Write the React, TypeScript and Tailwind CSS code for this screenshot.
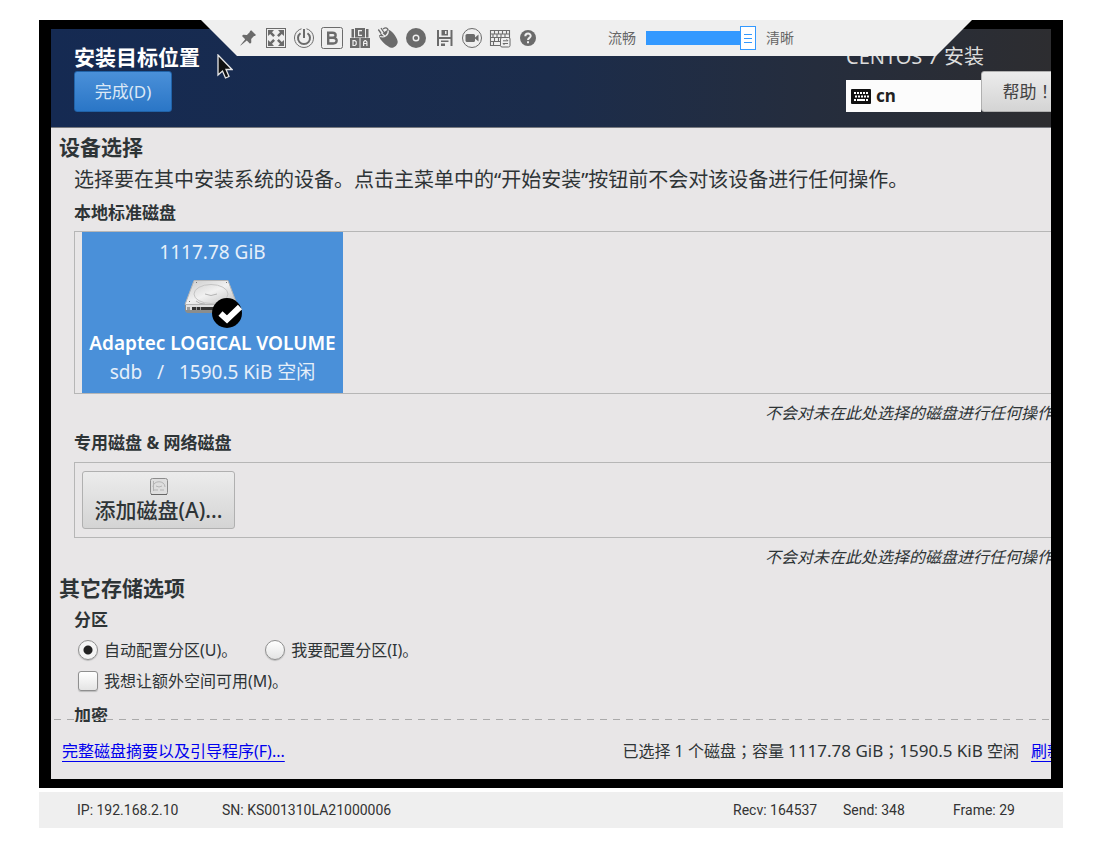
import type { ReactNode } from 'react';

const tools: { label: string; icon: ReactNode }[] = [
  {
    label: '固定',
    icon: (
      <path
        fill="currentColor"
        d="M13.2 2.2 18 7l-1.2 1.1-.8-.2-2.8 3 .1 3.7-1.3 1.2-3.2-3.3L3 17.3l-.8.4.4-.8 4.6-5.7L4 8l1.2-1.2 3.7.1 3-2.9-.1-.7z"
      />
    ),
  },
  {
    label: '全屏',
    icon: (
      <>
        <rect x="0.5" y="0.5" width="19" height="19" fill="none" stroke="currentColor" />
        <path fill="currentColor" d="M2 2h6L6 4.200l3 3L7.200 9l-3-3L2 8zM18 2v6l-2.200-2-3 3L11 7.200l3-3L12 2zM2 18v-6l2.200 2 3-3L9 12.800l-3 3L8 18zM18 18h-6l2-2.200-3-3 1.800-1.800 3 3L18 12z" />
      </>
    ),
  },
  {
    label: '电源',
    icon: (
      <g fill="none" stroke="currentColor">
        <path d="M7.500.8a9.500 9.500 0 1 0 5 0" />
        <path strokeWidth="2" d="M6.500 5.200a6 6 0 1 0 7 0M10 1v9" />
      </g>
    ),
  },
  {
    label: '引导',
    icon: (
      <>
        <rect x="-0.500" y="-0.500" width="21" height="21" rx="2" fill="none" stroke="currentColor" />
        <path
          fill="none"
          stroke="currentColor"
          strokeWidth="2.400"
          d="M6.200 4.700h4.300c4.200 0 4.200 5 0 5H6.200h5c4.600 0 4.600 5.800 0 5.800h-5zV16"
        />
      </>
    ),
  },
  {
    label: '组合键',
    icon: (
      <>
        <path fill="currentColor" d="M1.500 1H4v8.500H1.500zM5 0h10v9.500H5zM16 1h2.500v8.500H16zM0 10h9.500v10H0zM10.500 10H20v10h-9.500z" />
        <path
          fill="none"
          stroke="#efefef"
          strokeWidth="1.200"
          d="M12 2.600H8.600v4.800H12M3 12.600h2l1.200 1.200v2.500L5 17.500H3zM13.600 18v-4l1.300-1.400h.7l1.300 1.400v4M13.600 15.500h3.300"
        />
      </>
    ),
  },
  {
    label: '鼠标',
    icon: (
      <>
        <path
          fill="currentColor"
          d="M1 7.500 10 1.500c3 .5 8.500 6.500 9.600 11.500.8 3.500-3.400 7.300-6.600 6.800C9.500 18.800 1.200 12 1 7.500z"
        />
        <path fill="none" stroke="currentColor" strokeWidth="1.300" d="M.3 1.500 3.500 6M3 0l3 4.500M5 1c3-2 5-1 5 1.500" />
        <path fill="none" stroke="#efefef" strokeWidth="1.300" d="M2 8.500c4.500 1.500 8.400-1.300 8.300-6M3.500 5l3.500 3.200" />
      </>
    ),
  },
  {
    label: '光盘',
    icon: (
      <>
        <circle cx="10" cy="10" r="10" fill="currentColor" />
        <circle cx="10" cy="10" r="2.800" fill="none" stroke="#efefef" strokeWidth="1.400" />
      </>
    ),
  },
  {
    label: '保存',
    icon: (
      <path
        fill="currentColor"
        d="M3 2h2v7h11.500V2H18.500v16h-2v-7H5v7H3zM7.500 2h6.500v5.500H7.500zM11 3v3h1.500V3zM7 12.500h7.500V14H7zM7 15.500h4V18H7z"
        fillRule="evenodd"
      />
    ),
  },
  {
    label: '录像',
    icon: (
      <>
        <circle cx="10" cy="10" r="9.500" fill="none" stroke="currentColor" />
        <rect x="3.500" y="6" width="9.500" height="8" rx="1.500" fill="currentColor" />
        <path fill="currentColor" d="m13 9.500 3.500-3v7l-3.500-3z" />
      </>
    ),
  },
  {
    label: '键盘',
    icon: (
      <>
        <path
          fill="none"
          stroke="currentColor"
          strokeWidth="1.100"
          d="M.5 2.500h19v15H.5zM.5 6h19M.5 9.500h19M.5 13.500h19M4.500 2.500V6M8.500 2.500V6M12.500 2.500V6M16.500 2.500V6M3 6v3.500M7 6v3.500M11 6v3.500M15 6v3.500M4.500 9.500v4M8.500 9.500v4M3.500 13.500v4"
        />
        <rect x="10.500" y="9.500" width="9.500" height="9.500" rx="1.500" fill="#efefef" stroke="currentColor" />
        <path fill="none" stroke="currentColor" d="M13 12.800h5l-1.500-1.500M18 15.500h-5l1.500 1.500" />
      </>
    ),
  },
  {
    label: '帮助',
    icon: (
      <>
        <circle cx="10" cy="10" r="8" fill="currentColor" />
        <path
          fill="none"
          stroke="#efefef"
          strokeWidth="2"
          d="M7.300 8.200c0-3.600 5.600-3.400 5.400-.2-.1 1.800-2.700 2-2.700 4M10 13.200v2"
        />
      </>
    ),
  },
];

function Toolbar() {
  return (
    <div className="absolute top-0 right-[91px] left-[162px] flex h-9 items-center bg-[#efefef] pl-[33px] text-sm text-[#666] [clip-path:polygon(0_0,100%_0,calc(100%-36px)_100%,36px_100%)]">
      {tools.map((tool) => (
        <button key={tool.label} type="button" aria-label={tool.label} className="flex w-7 shrink-0 justify-center text-[#6b6b6b]">
          <svg viewBox="0 0 20 20" className="h-5 w-5 overflow-visible">
            {tool.icon}
          </svg>
        </button>
      ))}
      <label htmlFor="quality" className="ml-[66px]">
        流畅
      </label>
      <input
        id="quality"
        type="range"
        defaultValue={100}
        className="mx-[10px] h-[14px] w-[110px] appearance-none bg-[#3399ff] [&::-webkit-slider-thumb]:h-6 [&::-webkit-slider-thumb]:w-4 [&::-webkit-slider-thumb]:appearance-none [&::-webkit-slider-thumb]:border [&::-webkit-slider-thumb]:border-[#3399ff] [&::-webkit-slider-thumb]:bg-white [&::-webkit-slider-thumb]:bg-[linear-gradient(#3399ff_1px,transparent_1px,transparent_4px,#3399ff_4px,#3399ff_5px,transparent_5px,transparent_8px,#3399ff_8px)] [&::-webkit-slider-thumb]:bg-[length:8px_9px] [&::-webkit-slider-thumb]:bg-center [&::-webkit-slider-thumb]:bg-no-repeat"
      />
      <span>清晰</span>
    </div>
  );
}

function KeyboardIcon() {
  return (
    <svg viewBox="0 0 20 15" className="h-[15px] w-5">
      <rect width="20" height="15" rx="1" fill="#111" />
      <path
        stroke="#fff"
        strokeWidth="2"
        d="M3 4h2m1 0h2m1 0h2m1 0h2m1 0h2M4 7.500h2m1 0h2m1 0h2m1 0h2m1 0h2M3 11h2m1 0h8m1 0h2"
      />
    </svg>
  );
}

function DiskIcon() {
  return (
    <svg viewBox="0 0 60 50" className="h-[50px] w-[60px]">
      <defs>
        <linearGradient id="disk-top" x1="0" y1="0" x2="1" y2="1">
          <stop offset="0" stopColor="#c9c9c9" />
          <stop offset="0.500" stopColor="#f1f1f1" />
          <stop offset="1" stopColor="#bdbdbd" />
        </linearGradient>
      </defs>
      <path fill="#8b8d8c" d="M2 25h52v7l-2 2H4l-2-2z" />
      <path fill="#e0e0e0" d="M3 26h50v5H3z" />
      <path fill="#333" d="M9 28h30v3H9z" />
      <path fill="#999" d="M13 28h1v3h-1zM17 28h1v3h-1zM4 28h3v3H4z" />
      <path fill="url(#disk-top)" stroke="#b4b4b4" d="M11 1.500h34L54 25.500H2z" />
      <ellipse cx="28" cy="15" rx="17" ry="9.500" fill="none" stroke="#c4c4c4" />
      <path fill="none" stroke="#b4b4b4" d="M22 15q6 3 12 0M13 22q3 3 9 3" />
      <path fill="#777" d="M13 3h1v1h-1zM43 3h1v1h-1zM6 22h1v1H6z" />
      <circle cx="44" cy="34" r="15" fill="#000" />
      <path fill="none" stroke="#fff" strokeWidth="6" d="m37.500 34.500 6.500 6L57 28" />
    </svg>
  );
}

function SmallDiskIcon() {
  return (
    <svg viewBox="0 0 18 18" className="h-[18px] w-[18px]">
      <rect x="0.500" y="0.500" width="17" height="16" rx="2" fill="#dedede" stroke="#8c8c8c" />
      <path stroke="#666" d="M1 16.500h16" />
      <path fill="none" stroke="#b4b4b4" d="M3 9c0-7 12-7 12 0M4 12h4M10 12h4M6 8q3 2 6 0M3.500 3v10" />
    </svg>
  );
}

function Pointer() {
  return (
    <svg viewBox="0 0 16 26" className="absolute top-[34px] left-[178px] h-[26px] w-4">
      <path fill="#111" stroke="#e8e8e8" strokeWidth="1.300" d="M1 1v20l4.500-4 3 7 3.500-1.500-3-7H15z" />
    </svg>
  );
}

function Note() {
  return (
    <p className="-mr-[18px] text-right text-base leading-[38px] whitespace-nowrap italic">
      不会对未在此处选择的磁盘进行任何操作。
    </p>
  );
}

const greyButton = 'border border-[#b0b0b0] bg-linear-to-b from-[#ececec] to-[#d4d4d4]';

// full-width punctuation sits in the middle of its cell in this family
const centredPunctuation = "font-['Noto_Sans','Noto_Sans_CJK_TC',sans-serif]";

function Header() {
  return (
    <header className="flex h-[99px] items-start justify-between border-b border-[#77797f] bg-linear-to-r from-[#152a52] via-[#1b2c4b] to-[#2d2d30] pl-[23px]">
      <div>
        <h1 className="mt-[14px] text-[21px] leading-7 font-bold text-white">安装目标位置</h1>
        <button
          type="button"
          className="h-[41px] w-[98px] rounded-[3px] border border-[#2163a8] bg-linear-to-b from-[#4a90d9] to-[#2a76c6] text-[17px] text-[#dbe8f6]"
        >
          完成(D)
        </button>
      </div>
      <div className="shrink-0">
        <p className="mt-[14px] text-xl leading-7 text-[#dcdcdc]">CENTOS 7 安装</p>
        <div className="-mr-6 flex items-end">
          <div className="flex h-8 w-[135px] items-center gap-[5px] bg-[#fcfcfc] pl-[5px] text-[17px] font-bold text-[#222]">
            <KeyboardIcon />
            cn
          </div>
          <button
            type="button"
            className={`${greyButton} ${centredPunctuation} h-[41px] w-[94px] rounded-[3px] text-[17px] text-[#444]`}
          >
            帮助！
          </button>
        </div>
      </div>
    </header>
  );
}

const sectionTitle = 'pl-2 text-[21px] font-bold';
const groupTitle = 'text-[17px] font-bold';
const choice =
  'h-5 w-5 appearance-none border border-[#8f8f8f] bg-linear-to-b from-white to-[#e4e4e4] shadow-[0_1px_1px_#bbb]';

function Installer() {
  return (
    <main className="text-[#2e3436]">
      <h2 className={`${sectionTitle} leading-[38px]`}>设备选择</h2>
      <div className="pl-[23px]">
        <p className="text-xl leading-7 whitespace-nowrap">
          选择要在其中安装系统的设备。点击主菜单中的“开始安装”按钮前不会对该设备进行任何操作。
        </p>
        <h3 className={`${groupTitle} leading-[37px]`}>本地标准磁盘</h3>
        <div className="border-y border-l border-[#b6b6b6] pl-[7px]">
          <button
            type="button"
            className="flex h-[161px] w-[261px] flex-col items-center bg-[#4a90d9] pt-[5px] text-[19px] leading-[30px] whitespace-pre text-[#e6eff9]"
          >
            <span>1117.78 GiB</span>
            <span className="mt-3">
              <DiskIcon />
            </span>
            <span className="leading-7 font-semibold text-white">Adaptec LOGICAL VOLUME</span>
            <span>{'sdb   /   1590.5 KiB 空闲'}</span>
          </button>
        </div>
        <Note />
        <h3 className={`${groupTitle} mb-2 leading-[22px]`}>专用磁盘 &amp; 网络磁盘</h3>
        <div className="border-y border-l border-[#b6b6b6] py-2 pl-[7px]">
          <button
            type="button"
            className={`${greyButton} flex h-[58px] w-[153px] flex-col items-center rounded-[3px] pt-[6px] text-[21px] leading-7 font-medium`}
          >
            <SmallDiskIcon />
            添加磁盘(A)...
          </button>
        </div>
        <Note />
      </div>
      <h2 className={`${sectionTitle} leading-6`}>其它存储选项</h2>
      <div className="pl-[23px]">
        <h3 className={`${groupTitle} leading-10`}>分区</h3>
        <div className="mb-[6px] flex gap-7 pl-1 text-base leading-5">
          <label className="flex gap-[6px]">
            <input
              type="radio"
              name="partitioning"
              defaultChecked
              className={`${choice} rounded-full checked:bg-[radial-gradient(circle,#222_4px,#f4f4f4_5px)]`}
            />
            自动配置分区(U)。
          </label>
          <label className="flex gap-[6px]">
            <input type="radio" name="partitioning" className={`${choice} rounded-full`} />
            我要配置分区(I)。
          </label>
        </div>
        <label className="flex items-center gap-[6px] pl-1 text-base leading-[30px]">
          <input type="checkbox" className={`${choice} rounded-[3px]`} />
          我想让额外空间可用(M)。
        </label>
        <div className="relative">
          <h3 className={`${groupTitle} h-[26px] overflow-hidden leading-10`}>加密</h3>
          <div className="absolute right-0 bottom-[2px] -left-5 h-px bg-[repeating-linear-gradient(90deg,#aaa_0,#aaa_7px,transparent_7px,transparent_13px)]" />
        </div>
      </div>
      <footer className="flex h-[57px] items-center justify-between pl-[11px] text-base whitespace-nowrap">
        <a href="#summary" className="text-[#0000ee] underline underline-offset-4">
          完整磁盘摘要以及引导程序(F)...
        </a>
        <div className="-mr-3 flex items-baseline gap-3">
          <p className={centredPunctuation}>
            已选择 1 个磁盘；容量 <span className="text-[17px]">1117.78 GiB</span>；
            <span className="text-[17px]">1590.5 KiB</span> 空闲
          </p>
          <a href="#refresh" className="text-[#0000ee] underline underline-offset-4">
            刷新
          </a>
        </div>
      </footer>
    </main>
  );
}

export default function App() {
  return (
    <div className="bg-white pt-5 pr-[45px] pb-[15px] pl-[39px] font-['Noto_Sans','Noto_Sans_CJK_SC',sans-serif]">
      <div className="relative bg-black px-3 py-[9px]">
        <div className="overflow-hidden bg-[#e8e6e7]">
          <Header />
          <Installer />
        </div>
        <Toolbar />
        <Pointer />
      </div>
      <div className="mt-1 flex h-9 items-center justify-between bg-[#efefef] pl-[38px] font-[Roboto,sans-serif] text-sm text-[#333]">
        <div className="flex">
          <span className="w-[145px]">IP: 192.168.2.10</span>
          <span>SN: KS001310LA21000006</span>
        </div>
        <div className="flex">
          <span className="w-[110px]">Recv: 164537</span>
          <span className="w-[110px]">Send: 348</span>
          <span className="w-[110px]">Frame: 29</span>
        </div>
      </div>
    </div>
  );
}
